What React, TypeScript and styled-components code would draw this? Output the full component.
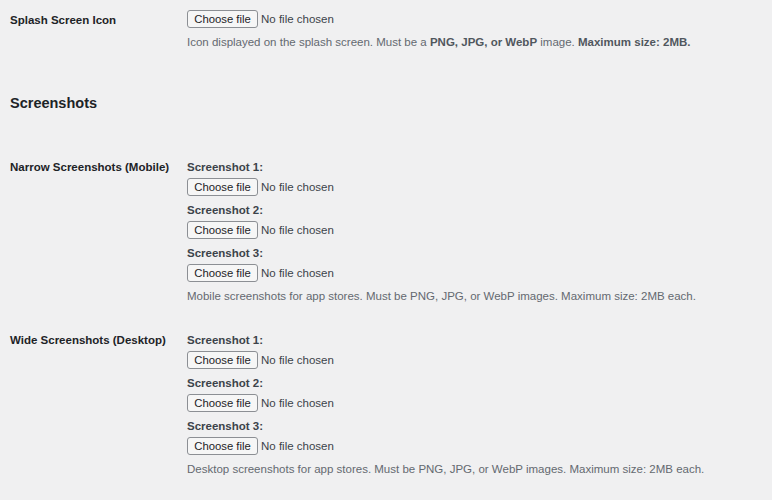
import React from "react";
import styled, { createGlobalStyle } from "styled-components";

const GlobalStyle = createGlobalStyle`
  html, body {
    margin: 0;
    padding: 0;
    background: #f0f0f1;
  }
  body {
    font-family: "Liberation Sans", Arial, sans-serif;
    color: #1d2327;
  }
`;

type Slot = { label: string };

const Page = styled.div`
  padding: 10px 0 0 10px;
  width: 762px;
`;

const Row = styled.div<{ $top?: number }>`
  display: grid;
  grid-template-columns: 177px 1fr;
  margin-top: ${(p) => p.$top ?? 0}px;
`;

const RowLabel = styled.div<{ $lh?: number }>`
  font-size: 11.5px;
  font-weight: 700;
  color: #1d2327;
  line-height: ${(p) => p.$lh ?? 14}px;
`;

const Field = styled.div`
  display: flex;
  flex-direction: column;
  align-items: flex-start;
`;

const SlotLabel = styled.span`
  font-size: 11.5px;
  font-weight: 700;
  color: #3c434a;
  line-height: 14px;
  margin-top: 7px;
  margin-bottom: 4px;

  &:first-child {
    margin-top: 0;
  }
`;

const Picker = styled.label`
  display: flex;
  align-items: center;
  height: 18px;
  cursor: pointer;

  input {
    display: none;
  }
`;

const PickerButton = styled.span`
  box-sizing: border-box;
  display: inline-flex;
  align-items: center;
  height: 18px;
  width: 71px;
  justify-content: center;
  font-size: 11.3px;
  color: #1d2327;
  background: #f6f6f6;
  border: 1px solid #8c8f94;
  border-radius: 3px;
`;

const PickerStatus = styled.span`
  margin-left: 3px;
  font-size: 11.5px;
  color: #3c434a;
`;

const Description = styled.p`
  margin: 7px 0 0;
  font-size: 11.5px;
  line-height: 14px;
  color: #646970;

  strong {
    font-weight: 700;
    color: #50575e;
  }
`;

const SectionTitle = styled.h2`
  margin: 44px 0 0;
  font-size: 14.5px;
  line-height: 20px;
  font-weight: 700;
  color: #1d2327;
`;

const slots: Slot[] = [
  { label: "Screenshot 1:" },
  { label: "Screenshot 2:" },
  { label: "Screenshot 3:" },
];

const FilePicker = () => (
  <Picker>
    <input type="file" accept="image/*" />
    <PickerButton>Choose file</PickerButton>
    <PickerStatus>No file chosen</PickerStatus>
  </Picker>
);

const ScreenshotGroup = ({ note }: { note: string }) => (
  <Field>
    {slots.map((slot) => (
      <React.Fragment key={slot.label}>
        <SlotLabel>{slot.label}</SlotLabel>
        <FilePicker />
      </React.Fragment>
    ))}
    <Description>{note}</Description>
  </Field>
);

export default function App() {
  return (
    <>
      <GlobalStyle />
      <Page>
        <Row>
          <RowLabel $lh={20}>Splash Screen Icon</RowLabel>
          <Field>
            <FilePicker />
            <Description>
              Icon displayed on the splash screen. Must be a <strong>PNG, JPG, or WebP</strong>{" "}
              image. <strong>Maximum size: 2MB.</strong>
            </Description>
          </Field>
        </Row>

        <SectionTitle>Screenshots</SectionTitle>

        <Row $top={47}>
          <RowLabel>Narrow Screenshots (Mobile)</RowLabel>
          <ScreenshotGroup note="Mobile screenshots for app stores. Must be PNG, JPG, or WebP images. Maximum size: 2MB each." />
        </Row>

        <Row $top={30}>
          <RowLabel>Wide Screenshots (Desktop)</RowLabel>
          <ScreenshotGroup note="Desktop screenshots for app stores. Must be PNG, JPG, or WebP images. Maximum size: 2MB each." />
        </Row>
      </Page>
    </>
  );
}
